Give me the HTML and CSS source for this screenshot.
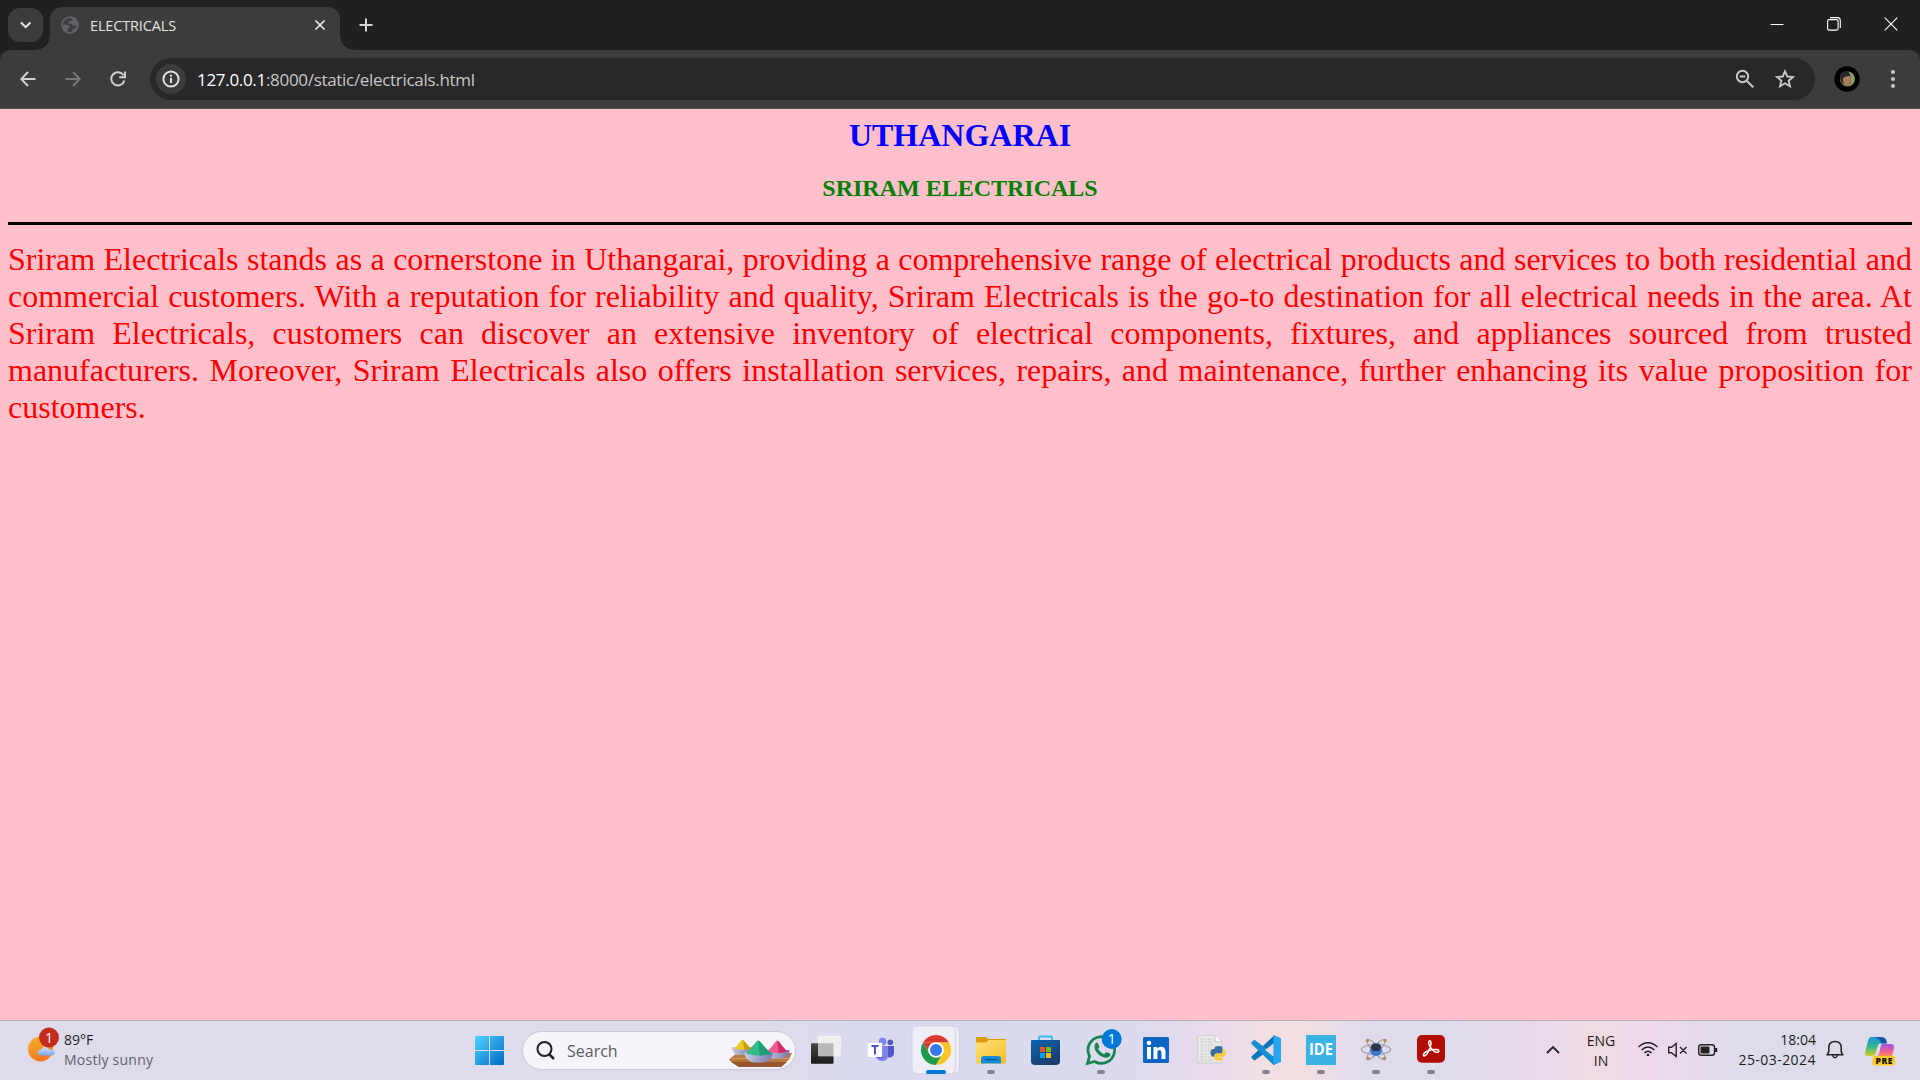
FILE: index.html
```html
<!DOCTYPE html>
<html lang="en">
<head>
<meta charset="utf-8">
<title>ELECTRICALS</title>
<link rel="stylesheet" href="styles.css">
</head>
<body>
<div class="screen">
  <header class="tabstrip">
    <button class="tab-search" aria-label="Search tabs"><svg width="35" height="34" fill="none" stroke="#e8e8e8" stroke-width="2"><path d="M13 14.500l4.700 4.700 4.700-4.700"/></svg></button>
    <div class="tab">
      <svg width="18" height="18" viewBox="0 0 18 18"><circle cx="9" cy="9" r="8.800" fill="#5f6368"/><path d="M8 2.200C4.700 2.500 2 5.400 2 8.800h4.500c1.600 0 2.300 1 2.300 2.300v1.200H6.600v3.200c1.500.7 3.300.7 4.700.1v-2.500h2.400c.8-.9 1.600-2.200 1.900-3.500h-3c-1.200 0-1.800-.7-1.800-1.800H7.400V5.500h1.500c.8 0 1.200-.5 1.200-1.200h1.600V2.800C10.700 2.200 9.200 2 8 2.200z" fill="#3c3c3c"/></svg>
      <span class="tab-title">ELECTRICALS</span>
      <svg width="12" height="12" fill="none" stroke="#e8e8e8" stroke-width="1.700"><path d="M1.500 1.500l9 9M10.500 1.500l-9 9"/></svg>
    </div>
    <svg class="new-tab" width="14" height="14" fill="none" stroke="#d5d7d6" stroke-width="2"><path d="M7 .5v13M.5 7h13"/></svg>
    <div class="window-controls">
      <svg width="14" height="14" stroke="#fff" fill="none"><path d="M.5 7.500h13"/></svg>
      <svg width="14" height="14" stroke="#fff" fill="none" stroke-width="1.100"><rect x=".6" y="2.600" width="10.500" height="10.500" rx="1.500"/><path d="M3 .6h7.500q2.800 0 2.800 2.800V11"/></svg>
      <svg width="14" height="14" stroke="#fff" fill="none" stroke-width="1.100"><path d="M.7.7l12.600 12.600M13.300.7L.7 13.300"/></svg>
    </div>
  </header>

  <div class="toolbar">
    <div class="nav">
      <svg width="16" height="16" fill="none" stroke="#d0d0d0" stroke-width="2"><path d="M15.500 8H1.500M8 1L1.300 8 8 15"/></svg>
      <svg width="16" height="16" fill="none" stroke="#777" stroke-width="2"><path d="M.5 8h14M8 1l6.700 7L8 15"/></svg>
      <svg width="16" height="16" fill="none" stroke="#d0d0d0" stroke-width="2"><path d="M14.300 9.500A6.600 6.600 0 1 1 13.500 4.300M15 .5v5.800H9.200"/></svg>
    </div>
    <div class="address">
      <span class="site-info"><svg width="18" height="18" fill="none" stroke="#e3e3e3" stroke-width="2"><circle cx="9" cy="9" r="7.600"/><path d="M9 8v5M9 4.700v2"/></svg></span>
      <span class="url"><span class="host">127.0.0.1</span>:8000/static/electricals.html</span>
      <div class="address-icons">
        <svg width="20" height="20" fill="none" stroke="#c7c7c7" stroke-width="2"><circle cx="7.500" cy="7.500" r="5.700"/><path d="M11.700 11.700l6.500 6.500M4.700 7.500h5.600"/></svg>
        <svg width="20" height="20" fill="none" stroke="#c7c7c7" stroke-width="1.900"><path d="M10 2.300l2.300 5.200 5.700.5-4.300 3.700 1.300 5.600-5-3-5 3 1.300-5.600L2 8l5.700-.5z"/></svg>
      </div>
    </div>
    <svg class="avatar" width="26" height="26"><circle cx="13" cy="13" r="12.700" fill="#000"/><circle cx="13.500" cy="13" r="7.500" fill="#8aa159"/><path d="M6 11q0-5 5-5.800 5-.2 5.500 5v7q-2.500 3.300-6 1.600Q6.500 17 6 11z" fill="#29272a"/><path d="M9 12q3-2.500 7.500-2v5.500q-1 4.500-4.500 4-3.500-1-3-7.500z" fill="#b37b60"/></svg>
    <svg class="more" width="6" height="20" fill="#c7c7c7"><circle cx="3" cy="3" r="2"/><circle cx="3" cy="10" r="2"/><circle cx="3" cy="17" r="2"/></svg>
  </div>

  <main class="page">
    <h1>UTHANGARAI</h1>
    <h2>SRIRAM ELECTRICALS</h2>
    <hr>
    <p>Sriram Electricals stands as a cornerstone in Uthangarai, providing a comprehensive range of electrical products and services to both residential and commercial customers. With a reputation for reliability and quality, Sriram Electricals is the go-to destination for all electrical needs in the area. At Sriram Electricals, customers can discover an extensive inventory of electrical components, fixtures, and appliances sourced from trusted manufacturers. Moreover, Sriram Electricals also offers installation services, repairs, and maintenance, further enhancing its value proposition for customers.</p>
  </main>

  <footer class="taskbar">
    <svg width="0" height="0" class="defs"><defs>
      <linearGradient id="sun" x2=".4" y2="1"><stop stop-color="#f0b52b"/><stop offset="1" stop-color="#f47a20"/></linearGradient>
      <linearGradient id="cloud" y2="1" x2="0"><stop stop-color="#cfe4ff"/><stop offset="1" stop-color="#7ca8e6"/></linearGradient>
      <linearGradient id="win" gradientUnits="userSpaceOnUse" x1="0" y1="0" x2="29" y2="29"><stop stop-color="#51d4ff"/><stop offset="1" stop-color="#0067c8"/></linearGradient>
      <linearGradient id="dark" y2="1" x2="0"><stop stop-color="#444"/><stop offset="1" stop-color="#1a1a1a"/></linearGradient>
      <linearGradient id="folder" x2="1" y2="1"><stop stop-color="#ffe07a"/><stop offset="1" stop-color="#f8bd27"/></linearGradient>
      <linearGradient id="store" x2=".6" y2="1"><stop stop-color="#0b64b4"/><stop offset="1" stop-color="#1b3d6b"/></linearGradient>
      <linearGradient id="bowl" x2="1"><stop stop-color="#c8cbe8"/><stop offset="1" stop-color="#7678ad"/></linearGradient>
      <linearGradient id="copA" x2="0" y2="1"><stop stop-color="#1894df"/><stop offset=".5" stop-color="#35b58c"/><stop offset="1" stop-color="#d8cf25"/></linearGradient>
      <linearGradient id="copB" x2="0" y2="1"><stop stop-color="#9b55ee"/><stop offset=".6" stop-color="#ef5e92"/><stop offset="1" stop-color="#fb8a5c"/></linearGradient>
    </defs></svg>

    <div class="weather">
      <svg width="33" height="36"><circle cx="13.500" cy="23" r="12.500" fill="url(#sun)"/><path d="M14 29.500q-4-.5-3.500-3.500.7-2.700 3.700-2.500 1.500-3.800 5.300-2.500 2 .7 2.500 2.500 6-.5 6 3 0 3-3.500 3z" fill="url(#cloud)"/><circle cx="22" cy="11.500" r="10" fill="#c42b1c"/><text x="22" y="16.500" text-anchor="middle" class="badge">1</text></svg>
      <div class="weather-text"><span>89°F</span><span class="muted">Mostly sunny</span></div>
    </div>

    <div class="apps">
      <div class="start"><svg width="29" height="29" fill="url(#win)"><path d="M0 1q0-1 1-1h13v14H0zM15 0h13q1 0 1 1v13H15zM0 15h14v14H1q-1 0-1-1zM15 15h14v13q0 1-1 1H15z"/></svg></div>
      <div class="search">
        <svg width="19" height="19" fill="none" stroke="#222" stroke-width="2"><circle cx="8.500" cy="8" r="7"/><path d="M13 13l5 5" stroke-width="2.500"/></svg>
        <span>Search</span>
        <svg class="holi" width="63" height="30"><path d="M0 23.500L6 18.500 56 17h7l-3 6.500-8 7.500H10Q3 27 0 23.500z" fill="#b97a40"/><path d="M1.500 25.500L58 26l-6 5H10z" fill="#95562d"/><path d="M3 22.500h57" stroke="#d59a58"/>
          <path d="M2.600 11.200h20.600q.5 7-5.200 7.800h-8Q3.500 18 2.600 11.200z" fill="url(#bowl)"/><path d="M4.500 12.800q4-3 7.500-8 1.700-2 3.400 0 3.500 5 7.500 8-9 2-18.400 0z" fill="#edc927"/><path d="M13.700 3.800q2.500 3 5 5.800 2.300 2.200 4.200 3.200-3 1.200-7.500 1z" fill="#c99a13"/>
          <path d="M36 14h24.700q-.5 8-7.700 8.600h-8q-8-.6-9-8.600z" fill="url(#bowl)"/><path d="M38 15.500q4.500-4 8.300-9.500 2-3 4 0 3.700 5.500 8.200 9.500-10 2.800-20.500 0z" fill="#f15b91"/><path d="M48.500 4.500q2.800 2.500 5 6 2.500 3 5 5-4 1.400-9 1.400z" fill="#d42a68"/>
          <path d="M15.300 16.200h28.400q-.2 9.500-9.700 10.200h-8q-10-.8-10.700-10.200z" fill="url(#bowl)"/><path d="M16.500 17.500q5-4.500 10.500-11.500 2.300-3 4.600 0 5.400 7 10.900 11.500-13 4-26 0z" fill="#34bd8a"/><path d="M29.500 4.500q3.500 3 6 6.500 3.500 4 7 6.500-5 1.800-12 2z" fill="#219d74"/></svg>
      </div>

      <svg class="app" width="55" height="60"><rect x="13" y="23.300" width="22.500" height="20.500" rx="1" fill="url(#dark)"/><rect x="20.500" y="16.300" width="22" height="19.700" rx="1" fill="#eeeeec" stroke="#fff" stroke-opacity=".5"/><path d="M20.500 23.300h15V36h-15z" fill="#b8b8b7"/></svg>
      <svg class="app" width="55" height="60"><circle cx="37.300" cy="22.300" r="2.800" fill="#4f57c5"/><path d="M34 26h7v7q0 4.500-6 4.500z" fill="#4f57c5"/><circle cx="29.600" cy="21.500" r="3.700" fill="#7b83eb"/><path d="M25.500 26H35v9q0 6-5.500 6T23 36z" fill="#7b83eb"/><path d="M25 25h5v13h-7z" fill="#4349a6" opacity=".5"/><rect x="14.800" y="22.700" width="14.500" height="14.300" rx=".7" fill="#fff"/><path d="M18.500 26h7M22 26v8.500" stroke="#5059b9" stroke-width="2" fill="none"/></svg>
      <svg class="app" width="55" height="60"><rect x="10" y="6" width="41.500" height="47.500" rx="5" fill="#ebeaf5" stroke="#cfcde0"/><rect x="4" y="6" width="43.300" height="47.800" rx="5" fill="#efeef7" stroke="#d3d1e2"/><path d="M15 22.500A15 15 0 0 1 41 22.500H28z" fill="#db3a2f"/><path d="M15 22.500L21.500 33.750A7.500 7.500 0 0 1 28 22.500z" fill="#db3a2f"/><path d="M15 22.500a15 15 0 0 0 13 22.500l6.500-11.250h-13z" fill="#1e9a4b"/><path d="M41 22.500a15 15 0 0 1-13 22.500l6.500-11.250A7.500 7.500 0 0 0 28 22.500z" fill="#fcc629"/><circle cx="28" cy="30" r="7.800" fill="#fff"/><circle cx="28" cy="30" r="6" fill="#3479ed"/><rect x="18" y="50" width="20" height="4" rx="2" fill="#0078d4"/></svg>
      <svg class="app" width="55" height="60"><path d="M13 18q0-1 1-1h8q2 0 3 2h17q1 0 1 1v4H13z" fill="#d99b08"/><path d="M13 22.500h10l3-2.500h17v22.500q0 1-1 1H14q-1 0-1-1z" fill="url(#folder)"/><path d="M18 43.500V39q0-3 3-3h14q3 0 3 3v4.500z" fill="#168bd6"/><path d="M22 39.500h12" stroke="#075998" stroke-width="1.300"/><rect class="dot" x="24" y="50" width="8" height="4" rx="2"/></svg>
      <svg class="app" width="55" height="60"><path d="M21 22v-4.700q0-.8.800-.8h11.400q.8 0 .8.800V22" stroke="#32c0f3" stroke-width="1.800" fill="none"/><path d="M13 21q0-1 1-1h27q1 0 1 1v20q0 4-4 4H17q-4 0-4-4z" fill="url(#store)"/><path d="M22 27h5v5h-5z" fill="#f25022"/><path d="M28 27h5v5h-5z" fill="#7fba00"/><path d="M22 33h5v5h-5z" fill="#00a4ef"/><path d="M28 33h5v5h-5z" fill="#ffb900"/></svg>
      <svg class="app" width="55" height="60"><path d="M14.500 43.500l2-7.300A13.300 13.300 0 1 1 21.500 41.500z" fill="none" stroke="#188550" stroke-width="2.800"/><path d="M22.300 23.500q1-1.500 2.300-.8l1.800 3.600q.3.700-1.300 2.500 2 4 6 5.500l1.900-2q.7-.5 4 1.300.7.500.2 1.800-1.500 2.800-5.200 2.300-7.200-1.900-10.200-8.200-1-3.700.5-6z" fill="#188550"/><circle cx="38.700" cy="19" r="10" fill="#0078d4"/><text x="38.700" y="24" text-anchor="middle" class="badge">1</text><rect class="dot" x="24" y="50" width="8" height="4" rx="2"/></svg>
      <svg class="app" width="55" height="60"><rect x="15" y="17" width="26" height="26" rx="1.500" fill="#0a66c2"/><path d="M19 27h4v12h-4zM25.500 27h3.700v1.600q1.200-1.900 3.700-1.900 4.600 0 4.600 5.300v7h-4v-6.300q0-2.700-2-2.700-2.100 0-2.100 2.800V39h-3.900z" fill="#fff"/><circle cx="21" cy="23" r="2.300" fill="#fff"/></svg>
      <svg class="app" width="55" height="60"><path d="M14.500 15.500h18l6 6V43h-24z" fill="#e8e8e5" stroke="#c9c9c8" stroke-width=".7"/><path d="M32 15.500v6.500h6.500" fill="#fff" stroke="#c5c5c5"/><path d="M17 19h13M17 22h12M17 25h14M17 28h11M17 31h10M17 34h10M17 37h12M17 40h14" stroke="#ccc" stroke-width="1.200" stroke-dasharray="4 1 2 1"/><path d="M31.500 29v-1q0-2 4-2t4 2v3.500q0 2-2 2h-4q-2 0-2 3.200H30q-2.500-.5-2.500-4t2.500-3.700H36V29z" fill="#366f9f"/><path d="M39.500 29.500H41q1.700.6 1.700 3.700t-2 3.600H35v.6h4.500v1q0 2-4 2t-4-2V35q0-1.500 2-1.500h4q2 0 2-2z" fill="#fbca35"/></svg>
      <svg class="app" width="55" height="60"><path d="M35.500 15.300L43 18.500v23L35.500 45 25 34.500l-8.500 6L13.500 38v-1.500L35.500 16z" fill="#0877ba"/><path d="M13.500 22l3-2.300L36 34.500V45L13.500 24z" fill="#168dd5"/><path d="M35.500 15.300L43 18.500v23L35.500 45z" fill="#27a5f2"/><path d="M35.500 23.500v13L27 30z" fill="#eddbe0"/><rect class="dot" x="24" y="50" width="8" height="4" rx="2"/></svg>
      <svg class="app" width="55" height="60"><path d="M13 15h30v30H13z" fill="#3bb3e5"/><text x="28" y="35.300" text-anchor="middle" textLength="24" lengthAdjust="spacingAndGlyphs" class="ide">IDE</text><rect class="dot" x="24" y="50" width="8" height="4" rx="2"/></svg>
      <svg class="app" width="55" height="60"><g fill="none" stroke="#a09ca3" stroke-width="1.100"><ellipse cx="28" cy="29.500" rx="14.500" ry="5"/><ellipse cx="28" cy="29.500" rx="13" ry="3.500" transform="rotate(48 28 29.500)"/><ellipse cx="28" cy="29.500" rx="13" ry="3.500" transform="rotate(-48 28 29.500)"/></g><circle cx="28" cy="30" r="6" fill="#3c76d3"/><path d="M22.500 27l2.500-3.500h6l2.500 3.500-2.500 4h-6z" fill="#2c3649"/><g fill="#b88b46"><circle cx="19.500" cy="20.500" r="1.700"/><circle cx="37" cy="20.500" r="1.700"/><circle cx="20" cy="38.500" r="1.700"/><circle cx="36.500" cy="38.500" r="1.700"/></g><rect class="dot" x="24" y="50" width="8" height="4" rx="2"/></svg>
      <svg class="app" width="55" height="60"><rect x="14" y="15" width="28" height="27.700" rx="5" fill="#b30b00"/><path d="M20.500 34.500c-.8 2.200 2.500 2.300 4.500-2.300 1.700-3.500 3-7 3-9.500 0-2.500-2.400-2.500-2.400 0 0 3.500 4.700 9.500 8.200 9.500 3 0 2.700-2.400-.3-2.600-5-.3-12 1.700-13 4.900z" fill="none" stroke="#fff" stroke-width="1.500"/><rect class="dot" x="24" y="50" width="8" height="4" rx="2"/></svg>
    </div>

    <div class="tray">
      <svg width="36" height="60" fill="none" stroke="#222" stroke-width="1.800"><path d="M12 33l6-6 6 6"/></svg>
      <div class="lang"><span>ENG</span><span>IN</span></div>
      <svg width="94" height="60" fill="none" stroke="#222" stroke-width="1.400"><path d="M7.500 27q9.500-8.500 19 0M10.500 30q6.500-6 13 0M13.300 33q3.700-3.500 7.400 0"/><circle cx="17" cy="35" r="1.300" fill="#222" stroke="none"/><path d="M37.700 27.300h2.800l4.700-3.800v13l-4.700-3.800h-2.800zM49 27l6.500 6.500M55.500 27L49 33.500"/><rect x="67.700" y="24.700" width="15.800" height="10.600" rx="2.500"/><rect x="69.500" y="26.500" width="9" height="7" rx="1" fill="#222" stroke="none"/><path d="M85 28v4" stroke-width="2.400"/></svg>
      <div class="clock"><span>18:04</span><span class="date">25-03-2024</span></div>
      <svg width="39" height="60" fill="none" stroke="#222" stroke-width="1.500"><path d="M11.300 34.700l1.500-3v-4q0-6.300 6.200-6.300t6.200 6.300v4l1.500 3zM16.500 35.500q2.500 4.500 5 0"/></svg>
      <svg width="50" height="60"><path d="M16.500 17h8.700q2.800 0 3.500 3l1 3.500h-4q-2.500 0-3.200 3l-1.600 6q-1 3.500-4 3.500h-4.500q-3-.5-2.200-4l2.800-11q1-4 3.500-4z" fill="url(#copA)"/><path d="M18 17h7.200q5.300 0 6 3l1 3.500h-6q-2-6.500-8.200-6.500z" fill="#1555a9"/><path d="M27 24h9.500q3 .5 2.500 4l-2 8H22q2-1 2.500-4l1-5q.4-2.500 1.500-3z" fill="url(#copB)"/><rect x="17.500" y="36" width="22.500" height="9.500" rx="2" fill="#ffc91d"/><text x="29" y="43.700" text-anchor="middle" textLength="17" class="pre">PRE</text></svg>
    </div>
  </footer>
</div>
</body>
</html>
```
FILE: styles.css
```css
* { box-sizing: border-box; }
body { margin: 0; background: #1f2120; }
svg { display: block; flex: none; }
.screen { display: flex; flex-direction: column; width: 1920px; height: 1080px; overflow: hidden; font-family: "Open Sans", "Noto Sans", sans-serif; }

.tabstrip { display: flex; align-items: flex-start; height: 50px; padding-left: 8px; background: #1f2120; flex: none; }
.tab-search { width: 35px; height: 34px; margin: 8px 7px 0 0; padding: 0; border: 0; border-radius: 12px; background: #3c3c3c; }
.tab { position: relative; display: flex; align-items: center; width: 290px; height: 43px; margin-top: 7px; padding: 0 14px 7px 11px; border-radius: 12px 12px 0 0; background: #3c3c3c; }
.tab::before, .tab::after { content: ""; position: absolute; bottom: 0; width: 14px; height: 14px; }
.tab::before { left: -14px; background: radial-gradient(circle at 0 0, transparent 13.500px, #3c3c3c 14px); }
.tab::after { right: -14px; background: radial-gradient(circle at 100% 0, transparent 13.500px, #3c3c3c 14px); }
.tab-title { margin: 0 auto 0 11px; color: #e3e3e3; font-size: 14.500px; letter-spacing: -.15px; }
.new-tab { margin: 18px 0 0 18.500px; }
.window-controls { display: flex; gap: 43px; margin: 17px 22px 0 auto; }

.toolbar { display: flex; align-items: center; height: 59px; padding: 0 24px 0 20px; border-bottom: 1px solid #494949; border-radius: 10px 10px 0 0; background: #3c3c3c; flex: none; }
.nav { display: flex; gap: 29px; }
.address { display: flex; align-items: center; width: 1665px; height: 42px; margin-left: 24px; padding: 0 20px 0 6px; border-radius: 21px; background: #282828; }
.site-info { display: grid; place-items: center; width: 30px; height: 30px; border-radius: 50%; background: #3c3c3c; }
.url { margin-left: 11px; color: #c7c7c7; font-size: 17px; letter-spacing: -.31px; white-space: nowrap; }
.host { color: #fff; }
.address-icons { display: flex; gap: 20px; margin-left: auto; }
.avatar { margin-left: 19px; }
.more { margin-left: auto; }

.page { flex: 1; padding: 8px; background: #ffc0cb; font-family: "Liberation Serif", "Times New Roman", serif; }
h1, h2 { margin: 0; text-align: center; }
h1 { color: #00f; font-size: 32px; line-height: 37px; }
h2 { margin-top: 20px; color: green; font-size: 24px; line-height: 28px; }
hr { height: 3px; margin: 20px 0 16px; border: 0; background: #000; }
.page p { margin: 0; color: red; font-size: 32px; line-height: 37px; text-align: justify; }

.taskbar { display: grid; grid-template-columns: 462px 1fr 385px; height: 60px; flex: none; color: #1d1d1d; font-size: 14px; box-shadow: inset 0 1px #b3b1bd; background: linear-gradient(90deg, #dedceb 0, #dedceb 760px, #d9daf0 880px, #dcdbed 1140px, #e9daec 1215px, #f1dfe1 1265px, #f1dfe1 1305px, #dfdbed 1370px, #dddcec 1440px, #e9d8ec 1530px, #f0dbe4 1600px, #ebd8ec 1665px, #dedceb 1740px); }
.defs { position: absolute; }
.weather { display: flex; padding: 6px 0 0 27px; }
.weather-text { display: flex; flex-direction: column; margin-left: 4px; padding-top: 4px; line-height: 20px; }
.muted { color: #61606a; letter-spacing: .25px; }
.badge { fill: #fff; font-size: 14px; }
.apps { display: flex; }
.start { display: grid; place-items: center; width: 55px; height: 60px; }
.search { display: flex; align-items: center; width: 274px; height: 39px; margin: 11px 2px 0 5px; padding-left: 13px; border: 1px solid #cbc8d9; border-radius: 20px; background: #f5f4fb; font-size: 16px; color: #5b5b61; }
.search span { margin-left: 12px; }
.holi { margin-left: auto; margin-right: 3px; overflow: visible; }
.dot { fill: #858291; }
.ide { fill: #fff; font: bold 16px "Open Sans", sans-serif; }
.pre { fill: #111; font: 800 8.500px "Open Sans", sans-serif; }
.tray { display: flex; }
.lang, .clock { display: flex; flex-direction: column; padding-top: 11px; line-height: 20px; }
.lang { width: 60px; align-items: center; }
.clock { width: 91px; padding-top: 10px; align-items: flex-end; }
.date { letter-spacing: .45px; }
```
